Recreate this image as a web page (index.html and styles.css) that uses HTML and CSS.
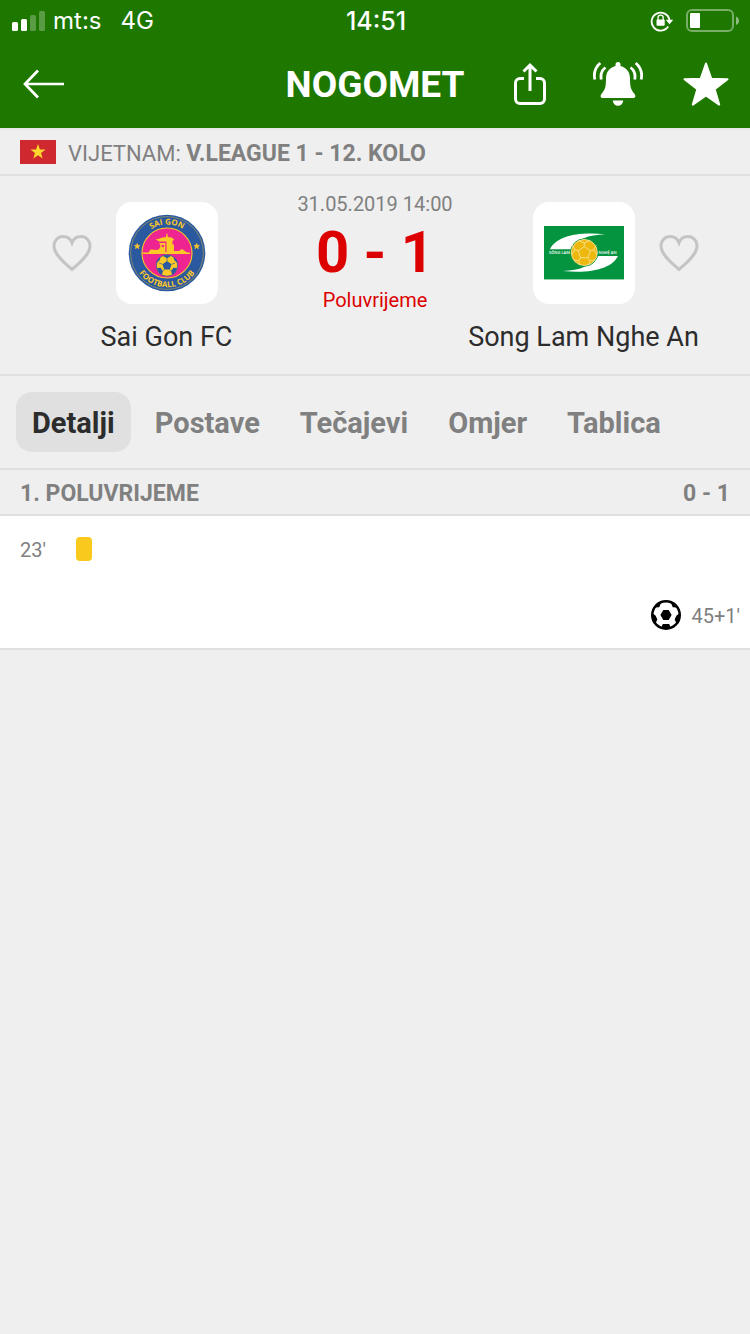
FILE: index.html
```html
<!DOCTYPE html>
<html lang="hr">
<head>
<meta charset="utf-8">
<meta name="viewport" content="width=device-width, initial-scale=1">
<title>Nogomet</title>
<link rel="stylesheet" href="styles.css">
</head>
<body>
<header class="top">
  <div class="status">
    <div class="status-left">
      <svg class="signal" width="34" height="20" viewBox="0 0 34 20" fill="#fff" aria-hidden="true">
        <rect x="0" y="11" width="6" height="9" rx="1.5"/>
        <rect x="9" y="8" width="6" height="12" rx="1.5"/>
        <rect x="18" y="4" width="6" height="16" rx="1.5" opacity=".27"/>
        <rect x="27" y="0" width="6" height="20" rx="1.5" opacity=".27"/>
      </svg>
      <span>mt:s</span>
      <span class="network">4G</span>
    </div>
    <time class="clock">14:51</time>
    <div class="status-right">
      <svg width="24" height="22" viewBox="0 0 24 22" aria-hidden="true">
        <path d="M18.200 16.600A9 9 0 1 1 19.500 10" fill="none" stroke="#fff" stroke-width="1.800"/>
        <path d="M15.800 9.800h7.400l-3.700 4.400z" fill="#fff"/>
        <path d="M8 10V7.800a2.600 2.600 0 0 1 5.200 0V10" fill="none" stroke="#fff" stroke-width="1.300"/>
        <rect x="6.500" y="9.600" width="8.200" height="6.200" rx="1" fill="#fff"/>
      </svg>
      <svg width="54" height="24" viewBox="0 0 54 24" aria-hidden="true">
        <rect x="1" y="1" width="46" height="21" rx="5" fill="none" stroke="#fff" stroke-width="2" opacity=".4"/>
        <rect x="4" y="4" width="10" height="15" rx="1" fill="#fff"/>
        <path d="M50 7.500c4 1.500 4 7 0 8.500z" fill="#fff" opacity=".5"/>
      </svg>
    </div>
  </div>
  <nav class="bar">
    <button class="bar-btn" aria-label="Natrag">
      <svg width="44" height="32" viewBox="0 0 44 32" fill="none" stroke="#fff" stroke-width="2.700"><path d="M42 16H3M16 2.500L3 16l13 13.500"/></svg>
    </button>
    <h1 class="bar-title">NOGOMET</h1>
    <div class="bar-actions">
      <button class="bar-btn" aria-label="Podijeli">
        <svg width="34" height="44" viewBox="0 0 34 44" fill="none" stroke="#fff" stroke-width="3"><path d="M11 16.500H7A4.500 4.500 0 0 0 2.500 21v16A4.500 4.500 0 0 0 7 41.500h20a4.500 4.500 0 0 0 4.500-4.500V21a4.500 4.500 0 0 0-4.500-4.500h-4M17 29V3M10.500 9.500L17 3l6.500 6.500"/></svg>
      </button>
      <button class="bar-btn" aria-label="Obavijesti">
        <svg width="52" height="46" viewBox="0 0 52 46">
          <path d="M26 1a2.500 2.500 0 0 1 2.500 2.500v1.500C34.500 6.500 38 11 38 17.500c0 9 1 11 4.600 15.500C44 35 43.500 37 41 37H11c-2.500 0-3-2-1.600-4C13 28.500 14 26.500 14 17.500c0-6.500 3.500-11 9.500-12.500V3.500A2.500 2.500 0 0 1 26 1zM20.800 39.500h10.400a5.200 5.200 0 0 1-10.400 0z" fill="#fff"/>
          <path d="M8.300 2C3 6.500 1.500 12 2.800 18.500M13.500 6.500C9.500 9.500 8.300 13.500 9.300 18.500M43.700 2C49 6.500 50.500 12 49.200 18.500M38.500 6.500c4 3 5.200 7 4.200 12" fill="none" stroke="#fff" stroke-width="2.800"/>
        </svg>
      </button>
      <button class="bar-btn" aria-label="Favorit">
        <svg width="46" height="46" viewBox="0 0 46 46" fill="#fff" stroke="#fff" stroke-width="2" stroke-linejoin="round"><path d="M23 2.500l5.300 15.300 16.200.4-12.900 9.900 4.600 15.500L23 34.500 9.800 43.600l4.600-15.500L1.500 18.200l16.200-.4z"/></svg>
      </button>
    </div>
  </nav>
</header>

<main>
  <div class="league">
    <svg width="36" height="24" viewBox="0 0 36 24" aria-hidden="true"><rect width="36" height="24" fill="#d0282f"/><path d="M18 4l1.900 5.400 5.700.1-4.600 3.500 1.700 5.500L18 15.200l-4.700 3.300L15 13l-4.600-3.500 5.700-.1z" fill="#fed82c"/></svg>
    <p class="league-name">VIJETNAM: <b class="league-round">V.LEAGUE 1 - 12. KOLO</b></p>
  </div>

  <section class="match">
    <div class="team">
      <button class="heart" aria-label="Prati Sai Gon FC">
        <svg width="40" height="38" viewBox="0 0 40 38" fill="none" stroke="#c4c4c4" stroke-width="3"><path d="M20 35.500C14 30 2 21 2 12 2 6.500 6 2.500 11 2.500c4 0 7.500 2.300 9 6.300C21.500 4.800 25 2.500 29 2.500c5 0 9 4 9 9.500C38 21 26 30 20 35.500z"/></svg>
      </button>
      <div class="crest">
        <svg width="102" height="102" viewBox="0 0 102 102" role="img" aria-label="Sai Gon FC">
          <defs>
            <path id="arc-top" d="M22.500 51a28.500 28.500 0 0 1 57 0"/>
            <path id="arc-bottom" d="M16.700 51a34.300 34.300 0 0 0 68.600 0"/>
          </defs>
          <circle cx="51" cy="51" r="38.300" fill="#2b599f"/>
          <circle cx="51" cy="51" r="36.400" fill="none" stroke="#b9a850" stroke-width=".6"/>
          <circle cx="51" cy="51" r="25" fill="#ee2590" stroke="#fcc428" stroke-width="1.100"/>
          <g fill="#fec927">
            <path d="M39.500 37.500q4-.500 6-1.800l4.500-.7.500-3.500h.8l.5 3.500 4.500.7 2 2.300-1.800.8v3.700h1.500v6.500h5l3-2 5 3.500h3v1.500H26.500v-1.500h6l2-3 7 .5 2-1.500V39.500z"/>
            <path d="M21.200 41.500l.7 1.900 2 .1-1.600 1.200.6 1.900-1.700-1.100-1.700 1.100.6-1.900-1.600-1.200 2-.1zM80.700 41.500l.7 1.900 2 .1-1.600 1.200.6 1.900-1.700-1.100-1.700 1.100.6-1.900-1.600-1.200 2-.1z" stroke="#fec927" stroke-width=".7"/>
            <circle cx="51" cy="63.500" r="10.700" stroke="#2b599f" stroke-width=".8"/>
          </g>
          <path d="M43.500 39.500h7v1.500h-7zM42.500 42h1.700v4h-1.700zM49.300 41h1.200v9h-1.200z" fill="#ee2590"/>
          <circle cx="46.800" cy="44" r="1.300" fill="#ee2590"/>
          <g fill="#2b599f">
            <path d="M51 59l4.500 3.300-1.700 5.200h-5.600l-1.700-5.200z"/>
            <path d="M46.500 53.800Q51 52 55.500 53.800L51 56.300zM40.500 61l3.200-2.800.8-3.500Q40.500 57.500 40.500 61zM61.500 61l-3.200-2.800-.8-3.500Q61.500 57.500 61.500 61zM41 66l3.600-.3 2.200 3.300-.8 3.800Q42 71 41 66zM61 66l-3.600-.3-2.200 3.300.8 3.800Q60 71 61 66z"/>
            <path d="M51 59v-3M55.500 62.300l3.500-1.300M53.800 67.500l2 2.500M48.200 67.500l-2 2.500M46.500 62.300L43 61" stroke="#2b599f" stroke-width=".7"/>
          </g>
          <g class="crest-text" fill="#fec927" text-anchor="middle">
            <text><textPath href="#arc-top" startOffset="50%">SAI GON</textPath></text>
            <text><textPath href="#arc-bottom" startOffset="50%">FOOTBALL CLUB</textPath></text>
          </g>
        </svg>
      </div>
      <h2 class="team-name">Sai Gon FC</h2>
    </div>

    <div class="result">
      <time class="date">31.05.2019 14:00</time>
      <strong class="score">0 - 1</strong>
      <span class="phase">Poluvrijeme</span>
    </div>

    <div class="team team-away">
      <div class="crest">
        <svg width="102" height="102" viewBox="0 0 102 102" role="img" aria-label="Song Lam Nghe An">
          <rect x="11" y="24" width="80" height="53" fill="#049440"/>
          <rect x="11" y="77" width="80" height="1" fill="#8fd0a9"/>
          <path d="M17 47.300C23 35 43 29.500 72 32.300 55 33 44 37 38.500 47.300z" fill="#fff"/>
          <path d="M85 54C79 66.300 59 71.800 30 69 47 68.300 58 64.300 63.500 54z" fill="#fff"/>
          <circle cx="51.300" cy="50.500" r="13.700" fill="#eeb70d" stroke="#049440" stroke-width="1"/>
          <g fill="none" stroke="#f8e9a6" stroke-width=".8">
            <circle cx="51.300" cy="50.500" r="13"/>
            <path d="M51.300 44.500l6 4.300-2.300 7h-7.400l-2.300-7zM51.300 44.500v-3.500l-6-2.500M51.300 41l6-2.500M57.300 48.800l3.300-1 2.500-4.500M60.600 47.800l3.400 5M55 55.800l2 3 5-.8M57 58.800l-1.500 4M47.600 55.800l-2 3-5-.8M45.600 58.800l1.500 4M45.300 48.800l-3.300-1-2.500-4.500M42 47.800l-3.400 5"/>
          </g>
          <g class="flag-text" fill="#fff">
            <text x="16" y="52.300">SÔNG LAM</text>
            <text x="65.500" y="52.300">NGHỆ AN</text>
          </g>
        </svg>
      </div>
      <button class="heart" aria-label="Prati Song Lam Nghe An">
        <svg width="40" height="38" viewBox="0 0 40 38" fill="none" stroke="#c4c4c4" stroke-width="3"><path d="M20 35.500C14 30 2 21 2 12 2 6.500 6 2.500 11 2.500c4 0 7.500 2.300 9 6.300C21.500 4.800 25 2.500 29 2.500c5 0 9 4 9 9.500C38 21 26 30 20 35.500z"/></svg>
      </button>
      <h2 class="team-name">Song Lam Nghe An</h2>
    </div>
  </section>

  <div class="tabs" role="tablist">
    <button class="tab tab-active" role="tab" aria-selected="true">Detalji</button>
    <button class="tab" role="tab" aria-selected="false">Postave</button>
    <button class="tab" role="tab" aria-selected="false">Tečajevi</button>
    <button class="tab" role="tab" aria-selected="false">Omjer</button>
    <button class="tab" role="tab" aria-selected="false">Tablica</button>
  </div>

  <section>
    <div class="period">
      <h3 class="period-title">1. POLUVRIJEME</h3>
      <span>0 - 1</span>
    </div>
    <ul class="events">
      <li class="event">
        <span class="minute">23'</span>
        <span class="card" role="img" aria-label="Žuti karton"></span>
      </li>
      <li class="event event-away">
        <svg width="30" height="30" viewBox="-15 -15 30 30" role="img" aria-label="Gol">
          <circle r="15"/>
          <circle r="12.500" fill="#fff"/>
          <path d="M-5.600 0l2.900-5h5.400L5.600 0 2.700 5h-5.400zM-12.500-7.500l5.700-.2L-4.600-13-9-12zM12.500-7.500l-5.700-.2L4.600-13 9-12zM-14-2l3.500 2.500 1.800 3.800-1.800 4.500L-13 8zM14-2L10.500.5 8.700 4.300l1.800 4.500L13 8zM-5 13l1.800-4h6.400L5 13z"/>
        </svg>
        <span class="minute">45+1'</span>
      </li>
    </ul>
  </section>
</main>
</body>
</html>
```
FILE: styles.css
```css
* {
  box-sizing: border-box;
}

body {
  margin: 0;
  min-height: 100vh;
  background: #efefef;
  color: #808080;
  font-family: Roboto, "Noto Sans", sans-serif;
  font-size: 22px;
  line-height: 28px;
}

h1, h2, h3, p, ul {
  margin: 0;
  padding: 0;
}

button {
  border: 0;
  padding: 0;
  background: none;
  color: inherit;
  font: inherit;
  cursor: pointer;
}

svg {
  display: block;
  flex: none;
}

.top {
  background: #1e7800;
  color: #fff;
}

.status {
  display: grid;
  grid-template-columns: 1fr auto 1fr;
  align-items: center;
  height: 40px;
  padding: 1px 10px 0 12px;
  font-family: Inter, sans-serif;
  font-size: 24px;
}

.status-left {
  display: flex;
  align-items: center;
  gap: 7px;
}

.network {
  margin-left: 12px;
}

.clock {
  font-size: 25px;
  font-weight: 500;
}

.status-right {
  display: flex;
  justify-content: flex-end;
  align-items: center;
  gap: 12px;
}

.bar {
  display: grid;
  grid-template-columns: 1fr auto 1fr;
  align-items: center;
  height: 88px;
}

.bar-btn {
  display: flex;
  justify-content: center;
  align-items: center;
  width: 88px;
  height: 88px;
}

.bar-title {
  padding-top: 2px;
  font-size: 37px;
  line-height: 44px;
}

.bar-actions {
  display: flex;
  justify-content: flex-end;
}

.league {
  display: flex;
  align-items: center;
  gap: 12px;
  height: 48px;
  padding: 0 20px;
  border-top: 2px solid #e8e8e8;
  border-bottom: 2px solid #e0e0e0;
}

.league-name {
  padding-top: 3px;
}

.league-round {
  font-size: 23px;
}

.match {
  display: grid;
  grid-template-columns: 1fr 180px 1fr;
  padding: 14px 48px 18px;
  border-bottom: 2px solid #e0e0e0;
}

.team {
  display: grid;
  grid-template-columns: minmax(0, 1fr) 102px minmax(0, 1fr);
  align-items: center;
  gap: 14px 24px;
  padding-top: 12px;
}

.heart {
  justify-self: end;
}

.team-away .crest {
  grid-column: 2;
}

.team-away .heart {
  justify-self: start;
}

.crest {
  border-radius: 16px;
  background: #fff;
}

.crest-text {
  font: 700 8px "Open Sans", sans-serif;
}

.flag-text {
  font: 600 4px "Open Sans", sans-serif;
}

.team-name {
  grid-column: 1 / -1;
  justify-self: center;
  color: #2c2c2c;
  font-size: 27px;
  font-weight: 400;
  line-height: 38px;
  white-space: nowrap;
}

.result {
  display: flex;
  flex-direction: column;
  align-items: center;
  color: #dd0000;
  font-size: 20px;
  white-space: nowrap;
}

.date {
  color: #808080;
}

.score {
  font-size: 58px;
  line-height: 68px;
}

.tabs {
  display: flex;
  gap: 8px;
  padding: 16px;
  border-bottom: 2px solid #e0e0e0;
}

.tab {
  height: 60px;
  padding: 2px 16px 0;
  border-radius: 16px;
  font-size: 29px;
  font-weight: 700;
}

.tab-active {
  background: #e0e0e0;
  color: #2c2c2c;
}

.period {
  display: flex;
  justify-content: space-between;
  align-items: center;
  height: 46px;
  padding: 3px 20px 0;
  border-bottom: 2px solid #e0e0e0;
  font-size: 23px;
  font-weight: 700;
}

.period-title {
  font-size: 23px;
}

.events {
  border-bottom: 2px solid #e0e0e0;
  background: #fff;
  list-style: none;
}

.event {
  display: flex;
  align-items: center;
  height: 66px;
  padding: 0 10px 0 20px;
}

.minute {
  min-width: 56px;
  padding-top: 2px;
  font-size: 20px;
}

.card {
  width: 16px;
  height: 24px;
  border-radius: 4px;
  background: #fac91e;
}

.event-away {
  justify-content: flex-end;
  gap: 10px;
}

.event-away .minute {
  min-width: 0;
}
```
